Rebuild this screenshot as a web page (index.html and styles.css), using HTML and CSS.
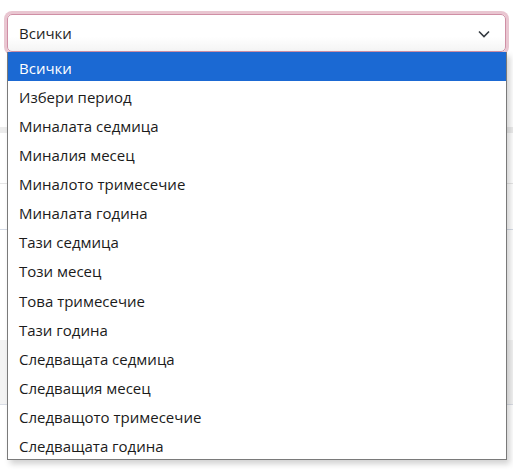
FILE: index.html
```html
<!DOCTYPE html>
<html lang="bg">
<head>
  <meta charset="UTF-8">
  <meta name="viewport" content="width=device-width, initial-scale=1.0">
  <title>Период</title>
  <link rel="stylesheet" href="styles.css">
</head>
<body>
  <div class="page">
    <!-- таблицата зад падащото меню -->
    <div class="bg-table">
      <div class="bg-row r1"></div>
      <div class="bg-row r2"></div>
      <div class="bg-row r3"></div>
      <div class="bg-row r4"></div>
    </div>

    <div class="period-select">
      <div class="select-box">
        <span class="select-value">Всички</span>
        <svg class="chevron" width="12" height="8" viewBox="0 0 12 8">
          <path d="M1 1.5 L6 6.5 L11 1.5" fill="none" stroke="#343a40" stroke-width="1.6"/>
        </svg>
      </div>
      <ul class="options">
        <li class="selected">Всички</li>
        <li>Избери период</li>
        <li>Миналата седмица</li>
        <li>Миналия месец</li>
        <li>Миналото тримесечие</li>
        <li>Миналата година</li>
        <li>Тази седмица</li>
        <li>Този месец</li>
        <li>Това тримесечие</li>
        <li>Тази година</li>
        <li>Следващата седмица</li>
        <li>Следващия месец</li>
        <li>Следващото тримесечие</li>
        <li>Следващата година</li>
      </ul>
    </div>
  </div>
</body>
</html>
```

FILE: styles.css
```css
body {
  margin: 0;
  background: #fff;
  font-family: 'Open Sans', 'Noto Sans', sans-serif;
  color: #212529;
}
.page {
  position: relative;
  width: 513px;
  height: 471px;
  overflow: hidden;
}
.bg-table {
  position: absolute;
  inset: 0;
}
.bg-row { position: absolute; left: 0; right: 0; }
.bg-row.r1 { top: 127px; height: 6px; background: #ececec; }
.bg-row.r2 { top: 229px; height: 1px; background: #d5dbe6; }
.bg-row.r3 { top: 340px; height: 64px; background: #f3f3f3; border-bottom: 1px solid #d9dde5; }
.bg-row.r4 { top: 183px; height: 1px; background: #e6e6e6; }

.period-select {
  position: relative;
  padding: 14px 7px 0 7px;
}
.select-box {
  height: 36px;
  display: flex;
  align-items: center;
  justify-content: space-between;
  padding: 0 15px 0 11px;
  background: linear-gradient(to bottom, #fff 60%, #f4f4f4);
  border: 1px solid #cf8fa5;
  border-radius: 5px;
  box-shadow: 0 0 0 3px #e9c6d1;
  font-size: 15px;
  color: #1f1f1f;
}
.chevron { margin-top: 1px; }
.options {
  position: absolute;
  top: 52px;
  left: 7px;
  right: 6px;
  margin: 0;
  padding: 0;
  list-style: none;
  background: #fff;
  border: 1px solid #7a7a7a;
  border-top: none;
  box-shadow: 3px 4px 6px rgba(0,0,0,0.18);
}
.options li {
  box-sizing: border-box;
  height: 29.07px;
  line-height: 29px;
  padding: 2px 0 0 11px;
  font-size: 15px;
  color: #1b1b1b;
}
.options li.selected {
  background: #1b69d3;
  color: #fff;
}
```
